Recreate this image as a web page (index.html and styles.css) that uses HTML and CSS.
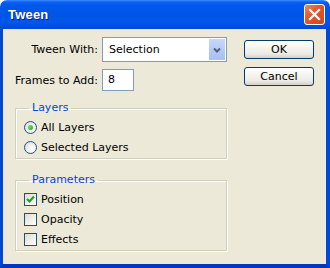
FILE: index.html
```html
<!DOCTYPE html>
<html lang="en">
<head>
    <meta charset="UTF-8">
    <title>Tween</title>
    <link rel="stylesheet" href="styles.css">
</head>
<body>
    <div class="window">
        <div class="titlebar">
            <span class="title">Tween</span>
            <button class="close" title="Close">
                <svg width="13" height="13" viewBox="0 0 13 13"><path d="M2 2 L11 11 M11 2 L2 11" stroke="#fff" stroke-width="2.2" stroke-linecap="square"/></svg>
            </button>
        </div>
        <div class="client">
            <div class="form">
                <div class="row">
                    <label class="label">Tween With:</label>
                    <div class="select">
                        <span class="select-value">Selection</span>
                        <span class="select-arrow">
                            <svg width="8" height="6" viewBox="0 0 8 6"><path d="M1 1.5 L4 4.5 L7 1.5" fill="none" stroke="#4d6185" stroke-width="2"/></svg>
                        </span>
                    </div>
                </div>
                <div class="row row-frames">
                    <label class="label">Frames to Add:</label>
                    <div class="field">8</div>
                </div>

                <fieldset class="group group-layers">
                    <legend>Layers</legend>
                    <div class="option"><span class="radio checked"></span>All Layers</div>
                    <div class="option"><span class="radio"></span>Selected Layers</div>
                </fieldset>

                <fieldset class="group group-params">
                    <legend>Parameters</legend>
                    <div class="option">
                        <span class="check checked">
                            <svg width="11" height="11" viewBox="0 0 11 11"><path d="M2 5 L4.5 7.5 L9 2.5" fill="none" stroke="#21a121" stroke-width="2.2"/></svg>
                        </span>Position
                    </div>
                    <div class="option"><span class="check"></span>Opacity</div>
                    <div class="option"><span class="check"></span>Effects</div>
                </fieldset>
            </div>
            <div class="actions">
                <button class="btn">OK</button>
                <button class="btn">Cancel</button>
            </div>
        </div>
    </div>
</body>
</html>
```

FILE: styles.css
```css
body {
    margin: 0;
    background-color: #fff;
    font-family: "DejaVu Sans", Verdana, sans-serif;
    font-size: 11px;
    color: #000;
}
.window {
    width: 330px;
    height: 268px;
    display: flex;
    flex-direction: column;
}
.titlebar {
    height: 29px;
    display: flex;
    align-items: center;
    justify-content: space-between;
    padding: 0 5px 0 8px;
    box-sizing: border-box;
    border-radius: 7px 7px 0 0;
    background: linear-gradient(#3d8cff 0, #0a62f0 2px, #0058ee 5px, #0055e5 14px, #0057ea 22px, #0048d6 29px);
}
.title {
    font-family: "Liberation Sans", Arial, sans-serif;
    font-weight: bold;
    font-size: 13px;
    color: #fff;
    text-shadow: 1px 1px 0 #0a1e80;
    letter-spacing: 0.2px;
}
.close {
    width: 21px;
    height: 21px;
    padding: 0;
    border: 1px solid #fff;
    border-radius: 3px;
    background: linear-gradient(135deg, #e88a68 0, #e15b30 40%, #cf4619 100%);
    display: flex;
    align-items: center;
    justify-content: center;
}
.client {
    flex: 1;
    display: flex;
    justify-content: space-between;
    background-color: #ece9d8;
    border-left: 3px solid #0347d6;
    border-right: 4px solid #0347d6;
    border-bottom: 4px solid #0336c4;
    padding: 8px 12px 0 11px;
}
.form {
    width: 216px;
    display: flex;
    flex-direction: column;
}
.row {
    display: flex;
    align-items: center;
    gap: 4px;
}
.row-frames {
    margin-top: 7px;
}
.label {
    width: 84px;
    text-align: right;
    white-space: nowrap;
}
.select {
    width: 125px;
    height: 25px;
    box-sizing: border-box;
    border: 1px solid #7f9db9;
    background-color: #fff;
    display: flex;
    align-items: center;
    justify-content: space-between;
    padding: 1px;
}
.select-value {
    padding-left: 5px;
}
.select-arrow {
    width: 16px;
    align-self: stretch;
    background: linear-gradient(#c6d7fb, #b3c8f5 60%, #a9c0f4);
    display: flex;
    align-items: center;
    justify-content: center;
}
.field {
    width: 32px;
    height: 22px;
    box-sizing: border-box;
    border: 1px solid #7f9db9;
    background-color: #fff;
    padding-left: 5px;
    line-height: 20px;
}
.group {
    margin: 10px 0 0 1px;
    width: 212px;
    box-sizing: border-box;
    border: 1px solid #d0d0bf;
    box-shadow: 1px 1px 0 #fff, inset 1px 1px 0 #fff;
    padding: 2px 0 1px 8px;
}
.group legend {
    color: #0046d5;
    padding: 0 3px;
    margin-left: 5px;
    line-height: 14px;
}
.group-params {
    margin-top: 14px;
}
.option {
    height: 20px;
    display: flex;
    align-items: center;
    gap: 4px;
}
.radio {
    width: 13px;
    height: 13px;
    box-sizing: border-box;
    border: 1px solid #1c5180;
    border-radius: 50%;
    background: radial-gradient(circle at 65% 65%, #fff 0, #f2f1ed 40%, #d8d5cb 100%);
    display: flex;
    align-items: center;
    justify-content: center;
}
.radio.checked::after {
    content: "";
    width: 5px;
    height: 5px;
    border-radius: 50%;
    background: radial-gradient(circle at 35% 35%, #6fdc6f, #21a121);
}
.check {
    width: 13px;
    height: 13px;
    box-sizing: border-box;
    border: 1px solid #1c5180;
    background: linear-gradient(135deg, #dcdcd7 0, #f2f1ec 60%, #fff 100%);
    display: flex;
    align-items: center;
    justify-content: center;
}
.actions {
    display: flex;
    flex-direction: column;
    gap: 8px;
    padding-top: 3px;
}
.btn {
    width: 70px;
    height: 19px;
    padding: 0;
    border: 1px solid #003c74;
    border-radius: 3px;
    background: linear-gradient(#fff 0, #f5f4ef 40%, #ecebe6 75%, #d6d0c5 100%);
    font-family: "DejaVu Sans", Verdana, sans-serif;
    font-size: 11px;
    color: #000;
}
```
